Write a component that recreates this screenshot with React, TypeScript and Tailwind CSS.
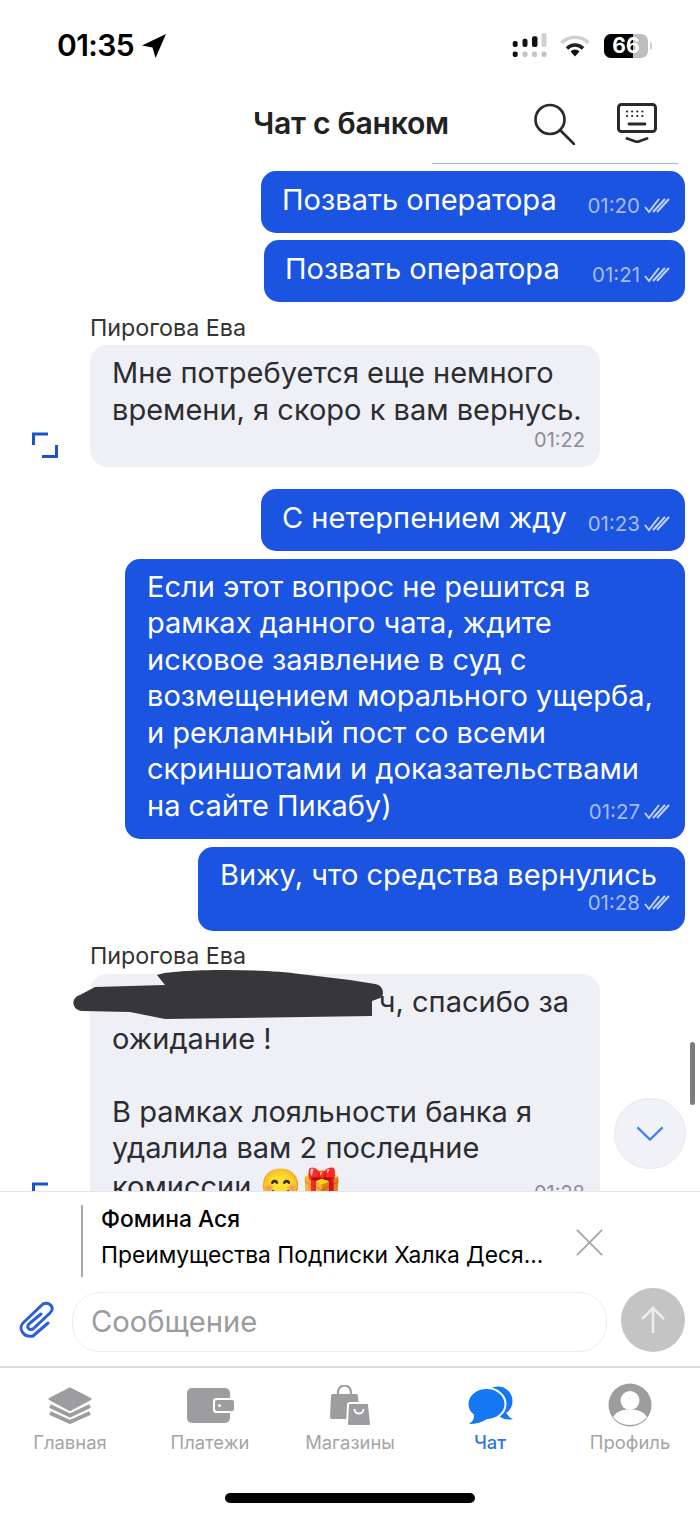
const font = "font-['Inter','Liberation_Sans',sans-serif]";

function Ticks({ className = "" }: { className?: string }) {
  return (
    <svg viewBox="0 0 26 16" className={"w-[26px] h-4 shrink-0 " + className} fill="none" stroke="currentColor" strokeWidth="2">
      <path d="M1 9l4 5L15 1" />
      <path d="M9 14L21 1M13 14L25 1" />
    </svg>
  );
}

function OutTime({ time }: { time: string }) {
  return (
    <div className="flex justify-end items-center gap-[4px] text-[20.5px] leading-[20px] text-[#a5bdf2]">
      {time}
      <Ticks className="text-[#c3d3f5]" />
    </div>
  );
}

function Outgoing({ text, time, w }: { text: string; time: string; w: number }) {
  return (
    <div
      className="self-end mr-[15px] bg-[#1b54e0] rounded-[15px] text-white text-[29px] leading-[37px] pl-[21px] pr-[15px] pt-[10px] pb-[15px] flex justify-between"
      style={{ width: w }}
    >
      <span>{text}</span>
      <span className="pt-[15px]">
        <OutTime time={time} />
      </span>
    </div>
  );
}

function Corners() {
  return (
    <svg viewBox="0 0 26 26" className="w-[26px] h-[26px] text-[#1b54c8] shrink-0" fill="none" stroke="currentColor" strokeWidth="3">
      <path d="M1.5 13V2H16M24.5 13v11.5H10" />
    </svg>
  );
}

function Tab({ label, active, children }: { label: string; active?: boolean; children: React.ReactNode }) {
  return (
    <div className={"flex flex-col items-center " + (active ? "text-[#2979e0] font-medium" : "text-[#a4a4a6]")}>
      <div className="h-[44px] flex items-center justify-center">{children}</div>
      <span className="mt-[3px] leading-[24px]">{label}</span>
    </div>
  );
}

export default function App() {
  return (
    <div className={"w-[700px] h-[1516px] bg-white flex flex-col overflow-hidden relative text-[#2b2d31] " + font}>
      {/* status bar */}
      <div className="h-[85px] shrink-0 flex items-center justify-between pl-[57px] pr-[48px] pt-[6px]">
        <div className="flex items-center gap-[8px] text-black text-[30px] font-semibold tracking-[-0.6px]">
          01:35
          <svg viewBox="0 0 24 24" className="w-[24px] h-[24px]" fill="black">
            <path d="M24 0L13.5 24 10.5 13.5 0 11.5z" />
          </svg>
        </div>
        <div className="flex items-center">
          <svg viewBox="0 0 35 25" className="w-[35px] h-[25px]">
            <rect x="0.7" y="8" width="5" height="6" rx="2" fill="#111" />
            <rect x="0.7" y="18.5" width="5" height="5.5" rx="2" fill="#111" />
            <rect x="10.5" y="5.7" width="5" height="8.3" rx="2" fill="#111" />
            <rect x="10.5" y="18.5" width="5" height="5.5" rx="2" fill="#c4c4c4" />
            <rect x="20" y="3.3" width="5.5" height="10.7" rx="2" fill="#111" />
            <rect x="20" y="18.5" width="5" height="5.5" rx="2" fill="#c4c4c4" />
            <rect x="29.5" y="0" width="5" height="14" rx="2" fill="#cfcfcf" />
            <rect x="29.5" y="18.5" width="5" height="5.5" rx="2" fill="#c4c4c4" />
          </svg>
          <svg viewBox="0 0 30 22" className="ml-[13px] w-[30px] h-[22px]" fill="none">
            <path d="M1.5 8a19 19 0 0 1 27 0" stroke="#d0d0d0" strokeWidth="3.5" />
            <path d="M7 13.5a11 11 0 0 1 16 0" stroke="#222" strokeWidth="3.5" />
            <path d="M10.5 16.5a6 6 0 0 1 9 0L15 21.5z" fill="#111" />
          </svg>
          <div className="ml-[14px] relative w-[44px] h-[24px] rounded-[7px] overflow-hidden bg-[#bdbdbd]">
            <div className="absolute inset-y-0 left-0 w-[29px] bg-black" />
            <span className="absolute inset-0 flex items-center justify-center text-white text-[21px] font-bold">66</span>
          </div>
          <div className="ml-[2px] w-[2px] h-[8px] rounded-r-full bg-[#cfcfcf]" />
        </div>
      </div>

      {/* header */}
      <div className="h-[78px] shrink-0 relative flex items-center">
        <span className="ml-[253px] text-[30.2px] font-semibold text-[#222] tracking-[-0.3px]">Чат с банком</span>
        <svg viewBox="0 0 42 42" className="absolute left-[533px] top-[18px] w-[42px] h-[42px]" fill="none" stroke="#2a2a2a" strokeWidth="2.7" strokeLinecap="round">
          <circle cx="17" cy="16.5" r="14.5" />
          <path d="M27.5 27.5L41 41" />
        </svg>
        <svg viewBox="0 0 40 40" className="absolute left-[617px] top-[18px] w-[40px] h-[40px]" fill="none" stroke="#2a2a2a" strokeLinecap="round">
          <rect x="1.5" y="1.5" width="37" height="27" rx="3" strokeWidth="3" />
          <path d="M10 8.5h20M10 13h20" strokeWidth="2.2" strokeDasharray="0.1 5" />
          <path d="M12 21h16" strokeWidth="2.8" />
          <path d="M10 35.5l10 3.5 10-3.5" strokeWidth="2.8" />
        </svg>
      </div>

      {/* messages */}
      <div className="flex-1 min-h-0 overflow-hidden relative flex flex-col">
        <div className="h-px ml-[432px] mr-[22px] bg-[#a5b4e4] shrink-0" />
        <div className="flex flex-col pt-[7px]">
          <Outgoing text="Позвать оператора" time="01:20" w={424} />
          <div className="h-[7px] shrink-0" />
          <Outgoing text="Позвать оператора" time="01:21" w={421} />

          <div className="text-[23.3px] leading-[26px] ml-[90px] mt-[13px] mb-[4px] text-[#333]">Пирогова Ева</div>
          <div className="flex items-end ml-[32px]">
            <div className="mb-[9px] mr-[32px]"><Corners /></div>
            <div className="w-[510px] bg-[#eff0f5] rounded-[18px] pl-[22px] pr-[15px] pt-[10px] pb-[15.5px] text-[29px] leading-[36.5px]">
              <div>Мне потребуется еще немного<br />времени, я скоро к вам вернусь.</div>
              <div className="text-right text-[20px] leading-[22px] text-[#8a8d94] pt-[1px]">01:22</div>
            </div>
          </div>

          <div className="h-[22px] shrink-0" />
          <Outgoing text="С нетерпением жду" time="01:23" w={424} />
          <div className="h-[8px] shrink-0" />
          <div className="self-end w-[560px] mr-[15px] bg-[#1b54e0] rounded-[15px] text-white text-[29px] leading-[36.5px] pl-[22px] pr-[15px] pt-[10px] pb-[17px]">
            <div>
              Если этот вопрос не решится в<br />
              рамках данного чата, ждите<br />
              исковое заявление в суд с<br />
              возмещением морального ущерба,<br />
              и рекламный пост со всеми<br />
              скриншотами и доказательствами<br />
              на сайте Пикабу)
            </div>
            <div className="-mt-[22.5px]"><OutTime time="01:27" /></div>
          </div>
          <div className="h-[8px] shrink-0" />
          <div className="self-end w-[487px] mr-[15px] bg-[#1b54e0] rounded-[15px] text-white text-[29px] leading-[36.5px] pl-[22px] pr-[15px] pt-[10px] pb-[18px]">
            <div>Вижу, что средства вернулись</div>
            <OutTime time="01:28" />
          </div>

          <div className="text-[23.3px] leading-[26px] ml-[90px] mt-[12px] mb-[5px] text-[#333]">Пирогова Ева</div>
          <div className="flex items-start ml-[32px]">
            <div className="mt-[208px] mr-[32px]"><Corners /></div>
            <div className="w-[510px] h-[300px] bg-[#eff0f5] rounded-[18px] pl-[22px] pr-[15px] pt-[10px] text-[29px] leading-[36.5px] relative">
              <div className="text-right pr-[16px]">ч, спасибо за</div>
              <div>ожидание !</div>
              <div className="h-[36.5px]" />
              <div>В рамках лояльности банка я</div>
              <div>удалила вам 2 последние</div>
              <div>комиссии <span className="text-[33px]">😊🎁</span></div>
              <span className="absolute right-[15px] top-[207px] text-[20px] leading-[24px] text-[#8a8d94]">01:28</span>
            </div>
          </div>
        </div>

        {/* redaction scribble lying over the text */}
        <svg viewBox="72 968 312 52" className="absolute left-[72px] top-[805px] w-[312px] h-[52px]" fill="#37373a">
          <path d="M157 975C170 969 260 968 300 974L350 980 375 984C384 985 385 996 380 998L372 1001 372 1016 165 1019 130 1012 82 1011C72 1010 70 998 80 995L95 987 165 985z" />
        </svg>

        {/* scroll indicator and jump button */}
        <div className="absolute left-[690px] top-[879px] w-[5px] h-[63px] rounded-full bg-[#7d7d7d]" />
        <div className="absolute left-[614px] top-[935px] w-[72px] h-[71px] rounded-full bg-[#f0f2f8] border border-[#e8e9ee] flex items-center justify-center">
          <svg viewBox="0 0 30 16" className="w-[28px] h-[15px]" fill="none" stroke="#3a86ee" strokeWidth="2.5">
            <path d="M1.5 1.5L15 14.5 28.5 1.5" />
          </svg>
        </div>
      </div>

      {/* reply + composer */}
      <div className="shrink-0 h-[175px] border-t border-[#e6e6e8] bg-white relative">
        <div className="ml-[81px] mt-[13px] h-[72px] border-l-2 border-[#a9a9a9] pl-[18px] text-black">
          <div className="text-[22.8px] leading-[28px] font-medium">Фомина Ася</div>
          <div className="text-[22.8px] leading-[30px] mt-[7px]">Преимущества Подписки Халка Деся...</div>
        </div>
        <svg viewBox="0 0 30 30" className="absolute left-[575px] top-[36px] w-[29px] h-[29px]" fill="none" stroke="#a8a8a8" strokeWidth="2">
          <path d="M2 2l26 26M28 2L2 28" />
        </svg>
        <div className="flex items-end mt-[11px]">
          <svg viewBox="0 0 36 38" className="ml-[18px] mb-[13px] w-[36px] h-[38px]" fill="none" stroke="#2a5fd6" strokeWidth="3" strokeLinecap="round">
            <path d="M30 22L15 35C5 37 0 27 5 22L25 3C32 0 37 7 32 12L15 28C10 30 8 25 12 22L23 13" />
          </svg>
          <div className="ml-[18px] w-[535px] h-[60px] rounded-[28px] border border-[#ececee] flex items-center pl-[18px] text-[#9b9ba0] text-[29.2px]">
            Сообщение
          </div>
          <div className="ml-[14px] w-[64px] h-[64px] rounded-full bg-[#c4c4c4] flex items-center justify-center">
            <svg viewBox="0 0 26 28" className="w-[26px] h-[28px]" fill="none" stroke="#eeeeee" strokeWidth="2.5">
              <path d="M13 27V2M2 13L13 2l11 11" />
            </svg>
          </div>
        </div>
      </div>

      {/* tab bar */}
      <div className="shrink-0 h-[150px] border-t-2 border-[#dcdcdc] relative">
        <div className="grid grid-cols-5 pt-[15px] text-[18.4px]">
          <Tab label="Главная">
            <svg viewBox="0 0 44 37" className="w-[44px] h-[37px]" fill="none" stroke="#9d9d9f">
              <path d="M22 1.5L42.5 12 22 23 1.5 12z" fill="#9d9d9f" strokeWidth="2" strokeLinejoin="round" />
              <path d="M2 19l20 9.5L42 19" strokeWidth="4" strokeLinejoin="round" />
              <path d="M2 26l20 9 20-9" strokeWidth="4" strokeLinejoin="round" />
            </svg>
          </Tab>
          <Tab label="Платежи">
            <svg viewBox="0 0 47 35" className="w-[47px] h-[35px]">
              <rect x="0" y="0" width="43" height="35" rx="5" fill="#9d9d9f" />
              <rect x="26" y="10" width="21" height="15" rx="3" fill="#fff" />
              <rect x="28" y="12" width="19" height="11" rx="2" fill="#9d9d9f" />
              <circle cx="32.5" cy="17.5" r="1.6" fill="#fff" />
            </svg>
          </Tab>
          <Tab label="Магазины">
            <svg viewBox="0 0 41 41" className="w-[41px] h-[41px]">
              <path d="M8 10V7a6.5 6.5 0 0 1 13 0v3" fill="none" stroke="#9d9d9f" strokeWidth="2.2" />
              <path d="M3 9h23a2 2 0 0 1 2 2l1.5 21a2 2 0 0 1-2 2H2a2 2 0 0 1-2-2L1 11a2 2 0 0 1 2-2z" fill="#9d9d9f" />
              <path d="M20 18h17a2 2 0 0 1 2 2l2 19a2 2 0 0 1-2 2H19a2 2 0 0 1-2-2l1-19a2 2 0 0 1 2-2z" fill="#9d9d9f" stroke="#fff" strokeWidth="2" />
              <path d="M24.5 24a4.5 4.5 0 0 0 9 0" fill="none" stroke="#fff" strokeWidth="2" />
            </svg>
          </Tab>
          <Tab label="Чат" active>
            <svg viewBox="0 0 46 38" className="w-[46px] h-[38px]" fill="#1578f2">
              <ellipse cx="31" cy="15" rx="14.5" ry="14.5" />
              <path d="M38 24Q40 31 46 33 37 35 31 29z" />
              <ellipse cx="19.5" cy="18" rx="19" ry="16" stroke="#fff" strokeWidth="2" />
              <path d="M7 28Q8 34 2 38 13 38 20 33z" />
            </svg>
          </Tab>
          <Tab label="Профиль">
            <svg viewBox="0 0 44 44" className="w-[44px] h-[44px]">
              <circle cx="22" cy="22" r="21.5" fill="#9d9d9f" />
              <circle cx="22" cy="17.5" r="9.5" fill="#fff" />
              <path d="M5 34c4-6 10-7.5 17-7.5S35 28 39 34c-4 5-10 8-17 8S9 39 5 34z" fill="#fff" />
            </svg>
          </Tab>
        </div>
        <div className="absolute left-[225px] top-[125px] w-[250px] h-[10px] rounded-full bg-black" />
      </div>
    </div>
  );
}
